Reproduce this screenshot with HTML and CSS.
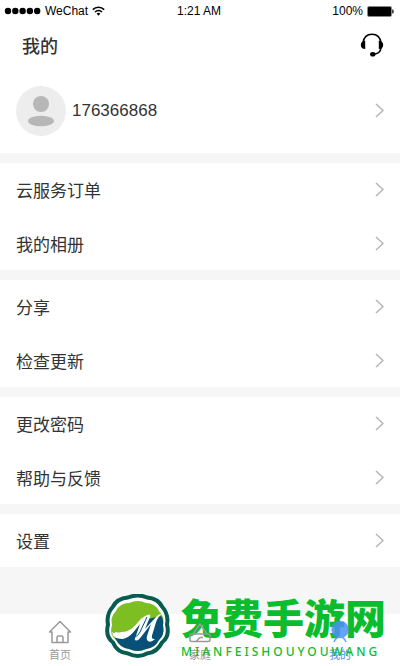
FILE: index.html
```
<!DOCTYPE html>
<html lang="zh-CN">

<head>
    <meta charset="utf-8">
    <title>我的</title>
    <meta name="viewport" content="width=device-width, initial-scale=1.0">
    <link rel="stylesheet" href="styles.css">
</head>

<body>
    <div class="status">
        <div class="carrier">
            <svg class="signal" width="37" height="8" viewBox="0 0 37 8">
                <circle cx="4" cy="4" r="3.2" />
                <circle cx="11.3" cy="4" r="3.2" />
                <circle cx="18.6" cy="4" r="3.2" />
                <circle cx="25.9" cy="4" r="3.2" />
                <circle cx="33.2" cy="4" r="3.2" />
            </svg>
            <span>WeChat</span>
            <svg class="wifi" width="13" height="10" viewBox="0 0 13 10">
                <path d="M.8 3.6a8.1 8.1 0 0 1 11.4 0M3 6a5 5 0 0 1 7 0" fill="none" stroke="#000" stroke-width="1.6" />
                <path d="M4.6 7.6a2.7 2.7 0 0 1 3.8 0L6.5 9.7z" />
            </svg>
        </div>
        <span class="time">1:21 AM</span>
        <div class="battery">
            <span>100%</span>
            <svg width="27" height="11" viewBox="0 0 27 11">
                <rect x=".5" y=".5" width="24" height="10" rx="1.5" fill="#000" stroke="#888" />
                <path d="M25 3.5h.8q1 0 1 2t-1 2H25z" fill="#444" />
            </svg>
        </div>
    </div>
    <header class="header">
        <h1>我的</h1>
        <button class="service" type="button" aria-label="客服">
            <svg width="24" height="24" viewBox="0 0 24 24">
                <path d="M3.1 9.5C3.8 4.3 7.3 1.2 12 1.2s8.2 3.1 8.9 8.3M21 15c-.5 4-3.2 5.9-7.5 6.2" fill="none" stroke="#000" stroke-width="1.6" />
                <path d="M5.2 7.8V16C2.5 16 .8 14.4 .8 12s1.7-4.1 4.4-4.2zM18.8 7.8V16c2.7 0 4.4-1.6 4.4-4s-1.7-4.1-4.4-4.2z" />
                <ellipse cx="12.8" cy="21.3" rx="2.7" ry="2.3" />
            </svg>
        </button>
    </header>
    <main class="main">
        <a class="profile" href="#profile">
            <svg class="avatar" width="50" height="50" viewBox="0 0 50 50">
                <circle cx="25" cy="25" r="25" fill="#ededed" />
                <circle cx="25" cy="18" r="8" fill="#b7b7b7" />
                <ellipse cx="25" cy="35" rx="13" ry="5.3" fill="#b7b7b7" />
            </svg>
            <span class="account">176366868</span>
            <svg class="arrow" viewBox="0 0 9 15"><path d="M1 1l7 6.5-7 6.5" /></svg>
        </a>
        <nav class="group">
            <a class="row" href="#orders">云服务订单<svg class="arrow" viewBox="0 0 9 15"><path d="M1 1l7 6.5-7 6.5" /></svg></a>
            <a class="row" href="#album">我的相册<svg class="arrow" viewBox="0 0 9 15"><path d="M1 1l7 6.5-7 6.5" /></svg></a>
        </nav>
        <nav class="group">
            <a class="row" href="#share">分享<svg class="arrow" viewBox="0 0 9 15"><path d="M1 1l7 6.5-7 6.5" /></svg></a>
            <a class="row" href="#update">检查更新<svg class="arrow" viewBox="0 0 9 15"><path d="M1 1l7 6.5-7 6.5" /></svg></a>
        </nav>
        <nav class="group">
            <a class="row" href="#password">更改密码<svg class="arrow" viewBox="0 0 9 15"><path d="M1 1l7 6.5-7 6.5" /></svg></a>
            <a class="row" href="#help">帮助与反馈<svg class="arrow" viewBox="0 0 9 15"><path d="M1 1l7 6.5-7 6.5" /></svg></a>
        </nav>
        <nav class="group">
            <a class="row" href="#settings">设置<svg class="arrow" viewBox="0 0 9 15"><path d="M1 1l7 6.5-7 6.5" /></svg></a>
        </nav>
    </main>
    <footer class="footer">
        <nav class="tabs">
            <a class="tab" href="#home">
                <svg width="24" height="24" viewBox="0 0 24 24">
                    <path d="M4 12H1.5L12 1.5 22.5 12H20v10.5H4zM9 22.5v-5q0-1.5 1.5-1.5h3q1.5 0 1.5 1.5v5" />
                </svg>
                首页
            </a>
            <a class="tab" href="#family">
                <svg width="24" height="24" viewBox="0 0 24 24">
                    <path d="M5 14l7-10 7 10M2 16q0-2 2-2h16q2 0 2 2v4q0 1.5-2 1.5H4q-2 0-2-1.5zM8 21.5l4-4h3" />
                </svg>
                家庭
            </a>
            <a class="tab active" href="#mine">
                <svg width="24" height="24" viewBox="0 0 24 24">
                    <circle cx="12" cy="9.5" r="8" />
                    <path d="M6 22q2-5 6-5t6 5" />
                </svg>
                我的
            </a>
        </nav>
        <div class="watermark">
            <svg class="badge" width="68" height="66" viewBox="0 0 68 66">
                <path d="M24 3.5q10-4 19 0 11 1 15 9 7 8 5 18 3 12-5 18-5 10-15 11-9 5-19 0-11-1-15-11-8-6-5-18-2-10 5-18 4-8 15-9z" fill="#fff" stroke="#075b50" stroke-width="4" />
                <path d="M25 9q9-4 17 0 9 0 13 8 6 6 4 14 2 10-4 15-4 8-13 9-8 4-17 0-9-1-13-9-7-5-4-15-2-8 4-14 4-8 13-8z" fill="#7dbe22" />
                <path d="M11 44q16 1 24-14l9-5 13-3q3 4 2 9 2 10-4 15-4 8-13 9-8 4-17 0-9-1-14-11z" fill="#075078" />
                <path d="M8 38q2 2 4 0 3 1 5 0c9 0 13-5 18-11q4-5 10-6.5c1.5 0 1.5 1 1 2.5L41 35 53 22q3-2.5 5-2.5-4 3-6 9l-4 13q-1 4 3 3.5-4 4-7 2-2-1.5-1-5l4-12-10 13q-3 4-5 3.5c-2 0-1-3 0-5l4-11.5C31 36 27 43 19 45q-7 0-10-3.5z" fill="#fff" />
                <path d="M43 23l-7 15q-2 4-5 5" fill="none" stroke="#075078" />
            </svg>
            <div class="brand">
                <strong class="brand-name">免费手游网</strong>
                <span class="brand-latin">MIANFEISHOUYOUWANG</span>
            </div>
        </div>
    </footer>
</body>

</html>
```
FILE: styles.css
```
* {
    box-sizing: border-box;
}

body {
    font-family: "Liberation Sans", "Noto Sans CJK SC", sans-serif;
    background-color: #fff;
    color: #333;
    margin: 0;
    min-height: 100vh;
    display: flex;
    flex-direction: column;
}

a {
    color: inherit;
    text-decoration: none;
}

.status {
    display: grid;
    grid-template-columns: 1fr auto 1fr;
    align-items: center;
    height: 22px;
    padding: 0 6px 0 4px;
    color: #000;
    font-size: 12px;
}

.carrier,
.battery {
    display: flex;
    align-items: center;
    gap: 4px;
}

.battery {
    justify-content: flex-end;
}

.header {
    display: flex;
    align-items: center;
    justify-content: space-between;
    height: 46px;
    padding: 0 16px 0 22px;
}

.header h1 {
    font-size: 18px;
    font-weight: 500;
    margin: 0;
}

.service {
    display: flex;
    padding: 0;
    border: 0;
    background: none;
}

.main {
    flex: 1;
    background-color: #f6f6f6;
}

.profile {
    display: flex;
    align-items: center;
    gap: 6px;
    height: 85px;
    padding: 0 16px;
    background-color: #fff;
}

.account {
    flex: 1;
    font-size: 17px;
}

.group {
    display: grid;
    gap: 1px;
    margin-top: 10px;
    background-color: #fff;
}

.row {
    display: flex;
    align-items: center;
    justify-content: space-between;
    height: 53px;
    padding: 0 16px;
    font-size: 17px;
}

.arrow {
    width: 9px;
    height: 15px;
    fill: none;
    stroke: #b5b5b5;
    stroke-width: 1.5;
}

.footer {
    position: relative;
    background-color: #fff;
}

.tabs {
    display: flex;
    justify-content: space-between;
    height: 52px;
    padding: 6px 36px 0;
}

.tab {
    display: flex;
    flex-direction: column;
    align-items: center;
    gap: 3px;
    width: 48px;
    font-size: 11px;
    line-height: 16px;
    color: #999;
}

/* icons stay readable above the watermark */
.tab svg {
    position: relative;
    z-index: 1;
    fill: none;
    stroke: #999;
    stroke-width: 1.5;
    stroke-linejoin: round;
}

.tab.active {
    color: #4d91f7;
}

.tab.active svg {
    stroke: #4d91f7;
    opacity: .85;
}

.tab.active circle {
    fill: #4d91f7;
}

.watermark {
    position: absolute;
    right: 14px;
    bottom: 0;
    display: flex;
    align-items: flex-start;
    gap: 9px;
    height: 74px;
    pointer-events: none;
}

.badge {
    flex: none;
    margin-top: 2px;
}

.brand {
    display: flex;
    flex-direction: column;
    gap: 4px;
    color: #0bbd2c;
    white-space: nowrap;
}

.brand-name {
    font-family: "Noto Sans CJK SC", sans-serif;
    font-size: 41px;
    font-weight: 900;
    line-height: 48px;
}

.brand-latin {
    font-family: "Noto Sans", sans-serif;
    font-size: 12px;
    font-weight: 500;
    letter-spacing: 3px;
    line-height: 16px;
}
```
